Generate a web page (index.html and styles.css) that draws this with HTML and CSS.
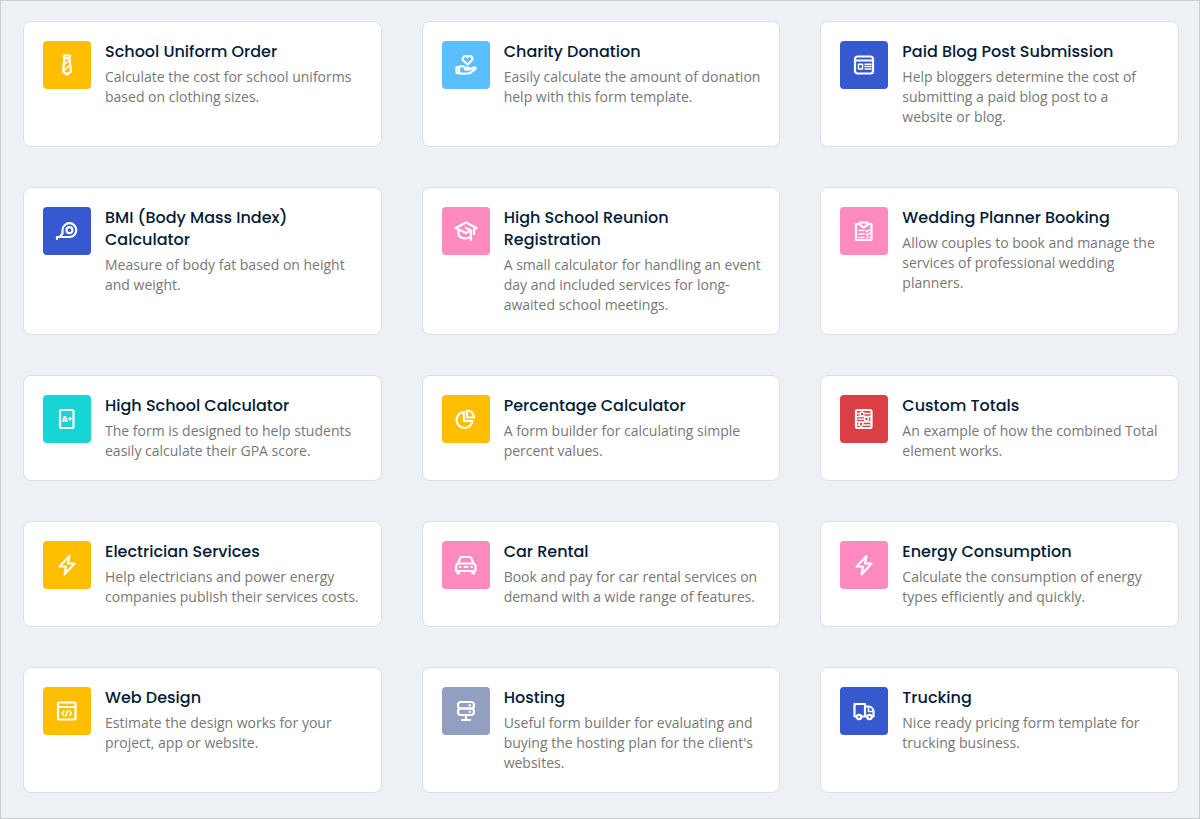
FILE: index.html
```html
<!DOCTYPE html>
<html lang="en">
<head>
  <meta charset="UTF-8">
  <meta name="viewport" content="width=device-width, initial-scale=1">
  <title>Form Templates</title>
  <link rel="stylesheet" href="styles.css">
</head>
<body>
  <main class="templates">

    <article class="card">
      <div class="icon yellow">
        <svg viewBox="0 0 24 24"><path d="M9 2.500h6v2.500H9zM9.500 5.500h5l1.500 13-4 3-4-3z"/><path class="thin" d="M9.500 11.500l4-3.500M9 17.500l5.500-5"/></svg>
      </div>
      <div class="text">
        <h3>School Uniform Order</h3>
        <p>Calculate the cost for school uniforms based on clothing sizes.</p>
      </div>
    </article>

    <article class="card">
      <div class="icon sky">
        <svg viewBox="0 0 24 24"><path d="M13.500 11.500L9.300 7.500a2.700 2.700 0 0 1 4.200-3.400 2.700 2.700 0 0 1 4.200 3.400z"/><path d="M2.500 14h2.500v6H2.500zM5 14c2-1.200 4-1.200 5.500.500h3.500c1.500 0 1.500 2 0 2h-3M15 16.500l5-2c1.500-.300 2.300.800 1 1.800l-5 3.700c-3 1.200-7 .500-11 .500"/></svg>
      </div>
      <div class="text">
        <h3>Charity Donation</h3>
        <p>Easily calculate the amount of donation help with this form template.</p>
      </div>
    </article>

    <article class="card">
      <div class="icon blue">
        <svg viewBox="0 0 24 24"><rect x="3" y="3.500" width="18" height="17" rx="2.500"/><path d="M4 7.500h16"/><path class="thin" d="M6.500 11.200h4v4.800h-4zM13 11.200h6M13 13.600h6M13 16h6"/></svg>
      </div>
      <div class="text">
        <h3>Paid Blog Post Submission</h3>
        <p>Help bloggers determine the cost of submitting a paid blog post to a website or blog.</p>
      </div>
    </article>

    <article class="card">
      <div class="icon blue">
        <svg viewBox="0 0 24 24"><path d="M2 20V18h12.500a6.900 6.900 0 1 0-7-7v3.500L5.500 17"/><circle cx="14.500" cy="11.200" r="3"/></svg>
      </div>
      <div class="text">
        <h3>BMI (Body Mass Index) Calculator</h3>
        <p>Measure of body fat based on height and weight.</p>
      </div>
    </article>

    <article class="card">
      <div class="icon pink">
        <svg viewBox="0 0 24 24"><path d="M12 14L1.500 9 12 3.500 22.500 9l-2.500 1.500M12 14l5-2.500L12 9"/><path d="M4.500 11v5c2 4 9 4.500 12 1.500M17 11.500V21M20 10.500v4.500"/></svg>
      </div>
      <div class="text">
        <h3>High School Reunion Registration</h3>
        <p>A small calculator for handling an event day and included services for long-awaited school meetings.</p>
      </div>
    </article>

    <article class="card">
      <div class="icon pink">
        <svg viewBox="0 0 24 24"><path d="M8 5H4v16h15.500V5h-4"/><path d="M8 3.500h7.500V6l-3.700 2.500L8 6z"/><path class="thin" d="M7 11.500h5M7 15h5M7 18.500h5M14 11.500l1.200 1.200 2.300-2M14 15l1.200 1.200 2.300-2M14.500 18.500h2.500"/></svg>
      </div>
      <div class="text">
        <h3>Wedding Planner Booking</h3>
        <p>Allow couples to book and manage the services of professional wedding planners.</p>
      </div>
    </article>

    <article class="card">
      <div class="icon teal">
        <svg viewBox="0 0 24 24"><rect x="5" y="3" width="13.500" height="18" rx="1.500"/><text x="12" y="15" text-anchor="middle">A+</text></svg>
      </div>
      <div class="text">
        <h3>High School Calculator</h3>
        <p>The form is designed to help students easily calculate their GPA score.</p>
      </div>
    </article>

    <article class="card">
      <div class="icon yellow">
        <svg viewBox="0 0 24 24"><path d="M10 5a8 8 0 1 0 8.500 9H10z"/><path d="M13 3.500v7h7A7 7 0 0 0 13 3.500z"/></svg>
      </div>
      <div class="text">
        <h3>Percentage Calculator</h3>
        <p>A form builder for calculating simple percent values.</p>
      </div>
    </article>

    <article class="card">
      <div class="icon red">
        <svg viewBox="0 0 24 24"><rect x="4" y="3" width="15.500" height="18" rx="1.500"/><path class="thin" d="M4 9.500h15.500M4 15h15.500M6 6.500h2M12.500 6.500h5M6 12.200h5.500M6 18h1M12 18h5.500"/><circle class="thin" cx="10" cy="7" r="2"/><circle class="thin" cx="14.500" cy="12" r="2"/><circle class="thin" cx="9" cy="17" r="2"/></svg>
      </div>
      <div class="text">
        <h3>Custom Totals</h3>
        <p>An example of how the combined Total element works.</p>
      </div>
    </article>

    <article class="card">
      <div class="icon yellow">
        <svg viewBox="0 0 24 24"><path d="M14.500 3L4.500 13.500H11L9.500 21.500l10-11H13z"/></svg>
      </div>
      <div class="text">
        <h3>Electrician Services</h3>
        <p>Help electricians and power energy companies publish their services costs.</p>
      </div>
    </article>

    <article class="card">
      <div class="icon pink">
        <svg viewBox="0 0 24 24"><path d="M4 10.500l2-5c.400-1 1-1.500 2-1.500h7.500c1 0 1.600.500 2 1.500l2 5M4 10.500h15.500c1.300.500 2 1.500 2 3V18H2v-4.500c0-1.500.700-2.500 2-3zM3.500 18v2.500h1.500V18M18.500 18v2.500h1.500V18"/><path d="M6 14h.500M10.500 14h3M17.500 14h.500"/></svg>
      </div>
      <div class="text">
        <h3>Car Rental</h3>
        <p>Book and pay for car rental services on demand with a wide range of features.</p>
      </div>
    </article>

    <article class="card">
      <div class="icon pink">
        <svg viewBox="0 0 24 24"><path d="M14.500 3L4.500 13.500H11L9.500 21.500l10-11H13z"/></svg>
      </div>
      <div class="text">
        <h3>Energy Consumption</h3>
        <p>Calculate the consumption of energy types efficiently and quickly.</p>
      </div>
    </article>

    <article class="card">
      <div class="icon yellow">
        <svg viewBox="0 0 24 24"><rect x="3" y="3.500" width="17.500" height="17" rx="1"/><path d="M3 8h17.500"/><path class="thin" d="M9 12l-2 2.300 2 2.200M14.500 12l2 2.300-2 2.200M12.700 11.700l-2 5.200"/></svg>
      </div>
      <div class="text">
        <h3>Web Design</h3>
        <p>Estimate the design works for your project, app or website.</p>
      </div>
    </article>

    <article class="card">
      <div class="icon gray">
        <svg viewBox="0 0 24 24"><rect x="4" y="3" width="16" height="6.500" rx="3"/><rect x="4" y="9.500" width="16" height="6.500" rx="3"/><path d="M12 16v5M8 21h8M15.500 6.300h.500M15.500 12.800h.500"/></svg>
      </div>
      <div class="text">
        <h3>Hosting</h3>
        <p>Useful form builder for evaluating and buying the hosting plan for the client's websites.</p>
      </div>
    </article>

    <article class="card">
      <div class="icon blue">
        <svg viewBox="0 0 24 24"><path d="M4.500 17.500H2.500V5H13v12.500H9.500M13 7.500h3.500c3 0 5 2.500 5 5.500v4.500H20M13 17.500h2"/><path class="thin" d="M16.500 8.500v4h4.500"/><circle cx="7" cy="18" r="2.200"/><circle cx="17.500" cy="18" r="2.200"/></svg>
      </div>
      <div class="text">
        <h3>Trucking</h3>
        <p>Nice ready pricing form template for trucking business.</p>
      </div>
    </article>

  </main>
</body>
</html>
```
FILE: styles.css
```css
* {
  box-sizing: border-box;
}

body {
  margin: 0;
  min-height: 100vh;
  padding: 20px 20px 24px 22px;
  background-color: #edf1f6;
  border: 1px solid #ccc;
  font-family: "Open Sans", sans-serif;
}

.templates {
  display: grid;
  grid-template-columns: repeat(3, 1fr);
  gap: 40px;
}

.card {
  display: flex;
  gap: 14px;
  padding: 19px 17px 19px 19px;
  background-color: #fff;
  border: 1px solid #dddfe3;
  border-radius: 8px;
}

.icon {
  display: flex;
  flex: none;
  align-items: center;
  justify-content: center;
  width: 48px;
  height: 48px;
  border-radius: 4px;
}

.icon svg {
  width: 24px;
  height: 24px;
  fill: none;
  stroke: #fff;
  stroke-width: 2.2;
  stroke-linecap: round;
  stroke-linejoin: round;
}

.icon .thin {
  stroke-width: 1.5;
}

.icon text {
  fill: #fff;
  stroke: none;
  font-size: 8px;
  font-weight: 800;
}

.yellow { background-color: #ffbf00; }
.sky { background-color: #5abeff; }
.blue { background-color: #3659cf; }
.pink { background-color: #ff8ac0; }
.teal { background-color: #18d5d5; }
.red { background-color: #da4043; }
.gray { background-color: #929fc1; }

.text {
  flex: 1;
  min-width: 0;
}

h3 {
  margin: 0 0 4px;
  color: #031b37;
  font-family: Poppins, Inter, sans-serif;
  font-size: 16px;
  font-weight: 500;
  line-height: 22px;
}

p {
  margin: 0;
  color: #777;
  font-size: 14px;
  line-height: 20px;
}
```
